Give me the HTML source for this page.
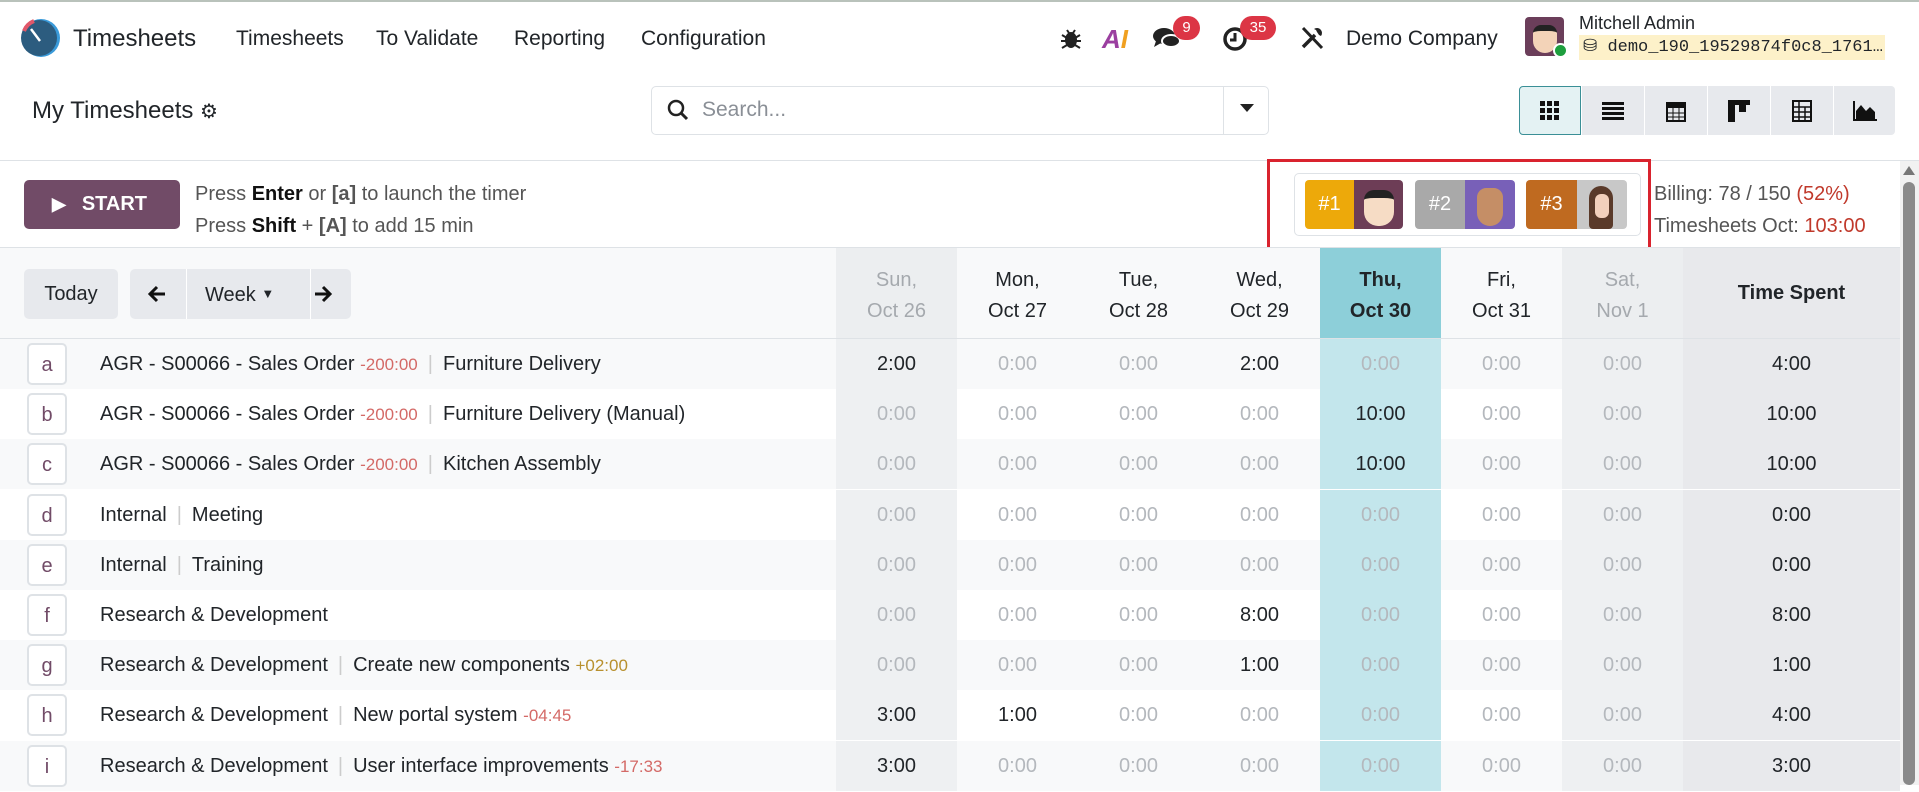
<!DOCTYPE html>
<html><head><meta charset="utf-8"><style>
*{box-sizing:border-box;margin:0;padding:0}
body{width:1919px;height:785px;overflow:hidden;background:#fff;font-family:"Liberation Sans",sans-serif;color:#212529;position:relative}
.a{position:absolute}
.nav{font-size:21px;top:27px;color:#212529}
.vb{position:absolute;top:86px;width:62px;height:49px;background:#e7e9ed;display:flex;align-items:center;justify-content:center}
.row{position:absolute;left:0;width:1900px;height:50px;font-size:20px}
.row .c{position:absolute;top:0;height:50px;width:121px;text-align:center;line-height:50px}
.z{color:#b4b8bd}
.key{position:absolute;left:27px;top:4px;width:40px;height:42px;border:2px solid #dee2e6;border-radius:5px;background:#fff;text-align:center;line-height:40px;color:#714b67;font-size:20px}
.lab{position:absolute;left:100px;top:0;line-height:50px;white-space:nowrap}
.neg{color:#d46a67;font-size:17px}
.pos{color:#b8902e;font-size:17px}
.sep{color:#ccc;margin:0 10px}
.hd{position:absolute;top:248px;height:90px;width:121px;text-align:center;font-size:20px;line-height:31px;padding-top:17px}
</style></head><body>
<div class="a" style="left:0;top:0;width:1919px;height:2px;background:#b9c2bb"></div>
<svg class="a" style="left:20px;top:17px" width="42" height="42" viewBox="0 0 42 42"><circle cx="21" cy="21" r="19" fill="#3a9ad9"/><circle cx="19" cy="21" r="18" fill="#2c5c7f"/><path d="M4 14 A18 18 0 0 1 14 4" stroke="#e0576a" stroke-width="4" fill="none"/><line x1="11" y1="12" x2="20" y2="24" stroke="#fff" stroke-width="2.5"/></svg>
<div class="a nav" style="left:73px;top:25px;font-size:24px">Timesheets</div>
<div class="a nav" style="left:236px">Timesheets</div>
<div class="a nav" style="left:376px">To Validate</div>
<div class="a nav" style="left:514px">Reporting</div>
<div class="a nav" style="left:641px">Configuration</div>
<svg class="a" style="left:1060px;top:26px" width="22" height="24" viewBox="0 0 22 24"><ellipse cx="11" cy="14" rx="6" ry="8" fill="#222"/><path d="M2 9l5 3M20 9l-5 3M1 15h5M21 15h-5M2 22l5-3M20 22l-5-3M7 4l2 3M15 4l-2 3" stroke="#222" stroke-width="2"/></svg>
<div class="a" style="left:1102px;top:24px;font-size:26px;font-weight:bold;color:#9b3fa0;font-style:italic">A<span style="color:#f0a020">I</span></div>
<svg class="a" style="left:1152px;top:26px" width="30" height="26" viewBox="0 0 30 26"><ellipse cx="12" cy="10" rx="11" ry="8" fill="#222"/><path d="M4 15l-2 6 7-4z" fill="#222"/><ellipse cx="19" cy="15" rx="9" ry="6" fill="#222" stroke="#fff" stroke-width="2"/></svg>
<div class="a" style="left:1173px;top:16px;width:27px;height:24px;border-radius:12px;background:#dc3545;color:#fff;font-size:15px;text-align:center;line-height:24px">9</div>
<svg class="a" style="left:1222px;top:26px" width="26" height="26" viewBox="0 0 26 26"><circle cx="13" cy="13" r="10" fill="none" stroke="#222" stroke-width="3.5"/><path d="M13 7v7h-5" stroke="#222" stroke-width="3" fill="none"/></svg>
<div class="a" style="left:1240px;top:16px;width:36px;height:24px;border-radius:12px;background:#dc3545;color:#fff;font-size:15px;text-align:center;line-height:24px">35</div>
<svg class="a" style="left:1299px;top:25px" width="26" height="26" viewBox="0 0 26 26"><path d="M4 3l19 20" stroke="#222" stroke-width="3"/><path d="M15 4a5 5 0 0 1 7 7l-2-1-2-3-1-2z" fill="#222"/><path d="M16 10L4 22" stroke="#222" stroke-width="3.5"/></svg>
<div class="a nav" style="left:1346px">Demo Company</div>
<div class="a" style="left:1525px;top:17px;width:39px;height:39px;border-radius:4px;background:#6b3e5a;overflow:hidden"><div style="margin:8px 0 0 8px;width:24px;height:28px;background:#f3d3b8;border-radius:8px 8px 12px 12px;border-top:6px solid #222"></div></div>
<div class="a" style="left:1553px;top:43px;width:15px;height:15px;border-radius:50%;background:#1e9e3e;border:2px solid #fff"></div>
<div class="a" style="left:1579px;top:13px;font-size:18px">Mitchell Admin</div>
<div class="a" style="left:1579px;top:35px;width:306px;height:25px;background:#fdf1c9;font-family:'Liberation Mono',monospace;font-size:17px;line-height:25px;padding-left:4px">⛁ demo_190_19529874f0c8_1761…</div>
<div class="a" style="left:32px;top:97px;font-size:24px">My Timesheets <span style="font-size:20px">⚙</span></div>
<div class="a" style="left:651px;top:86px;width:618px;height:49px;border:1px solid #dee2e6;border-radius:5px"></div>
<svg class="a" style="left:666px;top:98px" width="24" height="24" viewBox="0 0 24 24"><circle cx="10" cy="10" r="7" fill="none" stroke="#222" stroke-width="2.5"/><path d="M15 15l6 6" stroke="#222" stroke-width="3"/></svg>
<div class="a" style="left:702px;top:98px;font-size:21px;color:#8a8f96">Search...</div>
<div class="a" style="left:1223px;top:87px;width:1px;height:47px;background:#dee2e6"></div>
<div class="a" style="left:1240px;top:104px;border-left:7px solid transparent;border-right:7px solid transparent;border-top:8px solid #222"></div>
<div class="vb" style="left:1519px;background:#e4f2f3;border:1px solid #3a8f96;border-radius:4px 0 0 4px"><svg width="20" height="20"><g fill="#111"><rect x="0" y="0" width="5" height="5"/><rect x="7" y="0" width="5" height="5"/><rect x="14" y="0" width="5" height="5"/><rect x="0" y="7" width="5" height="5"/><rect x="7" y="7" width="5" height="5"/><rect x="14" y="7" width="5" height="5"/><rect x="0" y="14" width="5" height="5"/><rect x="7" y="14" width="5" height="5"/><rect x="14" y="14" width="5" height="5"/></g></svg></div>
<div class="vb" style="left:1582px"><svg width="22" height="18"><g fill="#111"><rect y="0" width="22" height="3"/><rect y="5" width="22" height="3"/><rect y="10" width="22" height="3"/><rect y="15" width="22" height="3"/></g></svg></div>
<div class="vb" style="left:1645px"><svg width="20" height="22"><rect x="1" y="3" width="18" height="18" fill="none" stroke="#111" stroke-width="2"/><rect x="1" y="3" width="18" height="5" fill="#111"/><path d="M1 13h18M1 17h18M7 8v13M13 8v13" stroke="#111"/></svg></div>
<div class="vb" style="left:1708px"><svg width="22" height="22"><rect x="0" y="0" width="22" height="5" fill="#111"/><rect x="0" y="0" width="7" height="22" fill="#111"/><rect x="11" y="0" width="7" height="12" fill="#111"/></svg></div>
<div class="vb" style="left:1771px"><svg width="20" height="22"><rect x="1" y="1" width="18" height="20" fill="none" stroke="#111" stroke-width="2"/><path d="M1 7h18M1 12h18M1 17h18M7 1v20M13 7v14" stroke="#111" stroke-width="1.5"/></svg></div>
<div class="vb" style="left:1834px;width:61px;border-radius:0 4px 4px 0"><svg width="24" height="20"><path d="M1 0v19h23" stroke="#111" stroke-width="2" fill="none"/><path d="M3 18V10l5-6 5 6 4-4 5 5v7z" fill="#111"/></svg></div>
<div class="a" style="left:0;top:160px;width:1919px;height:1px;background:#dee2e6"></div>
<div class="a" style="left:24px;top:180px;width:156px;height:49px;background:#714b67;border-radius:5px;color:#fff;font-size:20px;font-weight:bold;line-height:49px;padding-left:28px"><span style="font-size:18px;margin-right:16px">▶</span>START</div>
<div class="a" style="left:195px;top:178px;font-size:20px;color:#555;line-height:32px">Press <b style="color:#111">Enter</b> or <b>[a]</b> to launch the timer<br>Press <b style="color:#111">Shift</b> + <b>[A]</b> to add 15 min</div>
<div class="a" style="left:1267px;top:159px;width:384px;height:92px;border:3px solid #d9232e"></div>
<div class="a" style="left:1294px;top:173px;width:347px;height:63px;border:1px solid #dee2e6;border-radius:5px"></div>
<div class="a" style="left:1305px;top:180px;width:49px;height:49px;background:#eda90a;color:#fff;font-size:20px;line-height:49px;text-align:center;border-radius:4px 0 0 4px">#1</div>
<div class="a" style="left:1354px;top:180px;width:49px;height:49px;background:#6d3d56;border-radius:0 4px 4px 0"><div style="margin:10px 0 0 10px;width:30px;height:36px;background:#f6dcc5;border-radius:10px 10px 14px 14px;border-top:8px solid #222"></div></div>
<div class="a" style="left:1415px;top:180px;width:50px;height:49px;background:#a9a9a9;color:#fff;font-size:20px;line-height:49px;text-align:center;border-radius:4px 0 0 4px">#2</div>
<div class="a" style="left:1465px;top:180px;width:50px;height:49px;background:#7860b8;border-radius:0 4px 4px 0"><div style="margin:8px 0 0 12px;width:26px;height:38px;background:#c58e66;border-radius:10px 10px 14px 14px"></div></div>
<div class="a" style="left:1526px;top:180px;width:51px;height:49px;background:#bf6a20;color:#fff;font-size:20px;line-height:49px;text-align:center;border-radius:4px 0 0 4px">#3</div>
<div class="a" style="left:1577px;top:180px;width:50px;height:49px;background:#c8c8c8;border-radius:0 4px 4px 0"><div style="margin:6px 0 0 12px;width:24px;height:43px;background:#5a3a2a;border-radius:12px 12px 4px 4px"><div style="margin:0 0 0 6px;width:14px;height:24px;position:relative;top:8px;background:#f2d0bc;border-radius:6px"></div></div></div>
<div class="a" style="left:1654px;top:178px;font-size:20px;color:#555;line-height:32px">Billing: 78 / 150 <span style="color:#c0392b">(52%)</span><br>Timesheets Oct: <span style="color:#c0392b">103:00</span></div>
<div class="a" style="left:1900px;top:161px;width:19px;height:624px;background:#f1f1f1"></div>
<div class="a" style="left:1903px;top:166px;border-left:6px solid transparent;border-right:6px solid transparent;border-bottom:9px solid #777"></div>
<div class="a" style="left:1903px;top:182px;width:12px;height:603px;background:#8a8a8a;border-radius:6px"></div>
<div class="a" style="left:0;top:247px;width:1900px;height:1px;background:#dee2e6"></div>
<div class="a" style="left:0;top:248px;width:1900px;height:90px;background:#f8f9fa"></div>
<div class="a" style="left:24px;top:269px;width:94px;height:50px;background:#e7e9ed;border-radius:5px;font-size:20px;line-height:50px;text-align:center">Today</div>
<div class="a" style="left:130px;top:269px;width:221px;height:50px;background:#e7e9ed;border-radius:5px;font-size:20px;line-height:50px">
<svg class="a" style="left:17px;top:16px" width="20" height="18" viewBox="0 0 20 18"><path d="M18 9H4M10 2L3 9l7 7" stroke="#111" stroke-width="3" fill="none"/></svg>
<span class="a" style="left:56px;top:0;border-left:1px solid #fff;height:50px;padding-left:18px">Week <span style="font-size:13px;vertical-align:3px">▼</span></span>
<span class="a" style="left:180px;top:0;border-left:1px solid #fff;height:50px;width:41px"></span>
<svg class="a" style="left:183px;top:16px" width="20" height="18" viewBox="0 0 20 18"><path d="M2 9h14M10 2l7 7-7 7" stroke="#111" stroke-width="3" fill="none"/></svg></div>
<div class="hd" style="left:836px;background:#eceef0;color:#a5a9ae">Sun,<br>Oct 26</div>
<div class="hd" style="left:957px">Mon,<br>Oct 27</div>
<div class="hd" style="left:1078px">Tue,<br>Oct 28</div>
<div class="hd" style="left:1199px">Wed,<br>Oct 29</div>
<div class="hd" style="left:1320px;background:#8dcfd9;font-weight:bold">Thu,<br>Oct 30</div>
<div class="hd" style="left:1441px">Fri,<br>Oct 31</div>
<div class="hd" style="left:1562px;background:#eceef0;color:#a5a9ae">Sat,<br>Nov 1</div>
<div class="hd" style="left:1683px;width:217px;background:#e8e9ec;font-weight:bold;line-height:90px;padding-top:0">Time Spent</div>
<div class="a" style="left:0;top:338px;width:1900px;height:1px;background:#dee2e6"></div>
<div id="rows"></div>
<script>
var R=[
["a",'AGR - S00066 - Sales Order <span class="neg">-200:00</span><span class="sep">|</span>Furniture Delivery',["2:00",0,0,"2:00",0,0,0],"4:00"],
["b",'AGR - S00066 - Sales Order <span class="neg">-200:00</span><span class="sep">|</span>Furniture Delivery (Manual)',[0,0,0,0,"10:00",0,0],"10:00"],
["c",'AGR - S00066 - Sales Order <span class="neg">-200:00</span><span class="sep">|</span>Kitchen Assembly',[0,0,0,0,"10:00",0,0],"10:00"],
["d",'Internal<span class="sep">|</span>Meeting',[0,0,0,0,0,0,0],"0:00"],
["e",'Internal<span class="sep">|</span>Training',[0,0,0,0,0,0,0],"0:00"],
["f",'Research &amp; Development',[0,0,0,"8:00",0,0,0],"8:00"],
["g",'Research &amp; Development<span class="sep">|</span>Create new components <span class="pos">+02:00</span>',[0,0,0,"1:00",0,0,0],"1:00"],
["h",'Research &amp; Development<span class="sep">|</span>New portal system <span class="neg">-04:45</span>',["3:00","1:00",0,0,0,0,0],"4:00"],
["i",'Research &amp; Development<span class="sep">|</span>User interface improvements <span class="neg">-17:33</span>',["3:00",0,0,0,0,0,0],"3:00"]];
var h="";
R.forEach(function(r,i){
 var bg=i%2==0?"#f8f9fa":"#fff";
 h+='<div class="row" style="top:'+(339+i*50.2)+'px;background:'+bg+'"><div class="key">'+r[0]+'</div><div class="lab">'+r[1]+'</div>';
 r[2].forEach(function(v,j){
  var cb=j==0||j==6?"#eef0f2":(j==4?"#c3e6ec":"transparent");
  h+='<div class="c'+(v?'':' z')+'" style="left:'+(836+j*121)+'px;background:'+cb+'">'+(v||"0:00")+'</div>';
 });
 h+='<div class="c" style="left:1683px;width:217px;background:#e8e9ec">'+r[3]+'</div></div>';
});
document.getElementById("rows").innerHTML=h;
</script>
</body></html>
